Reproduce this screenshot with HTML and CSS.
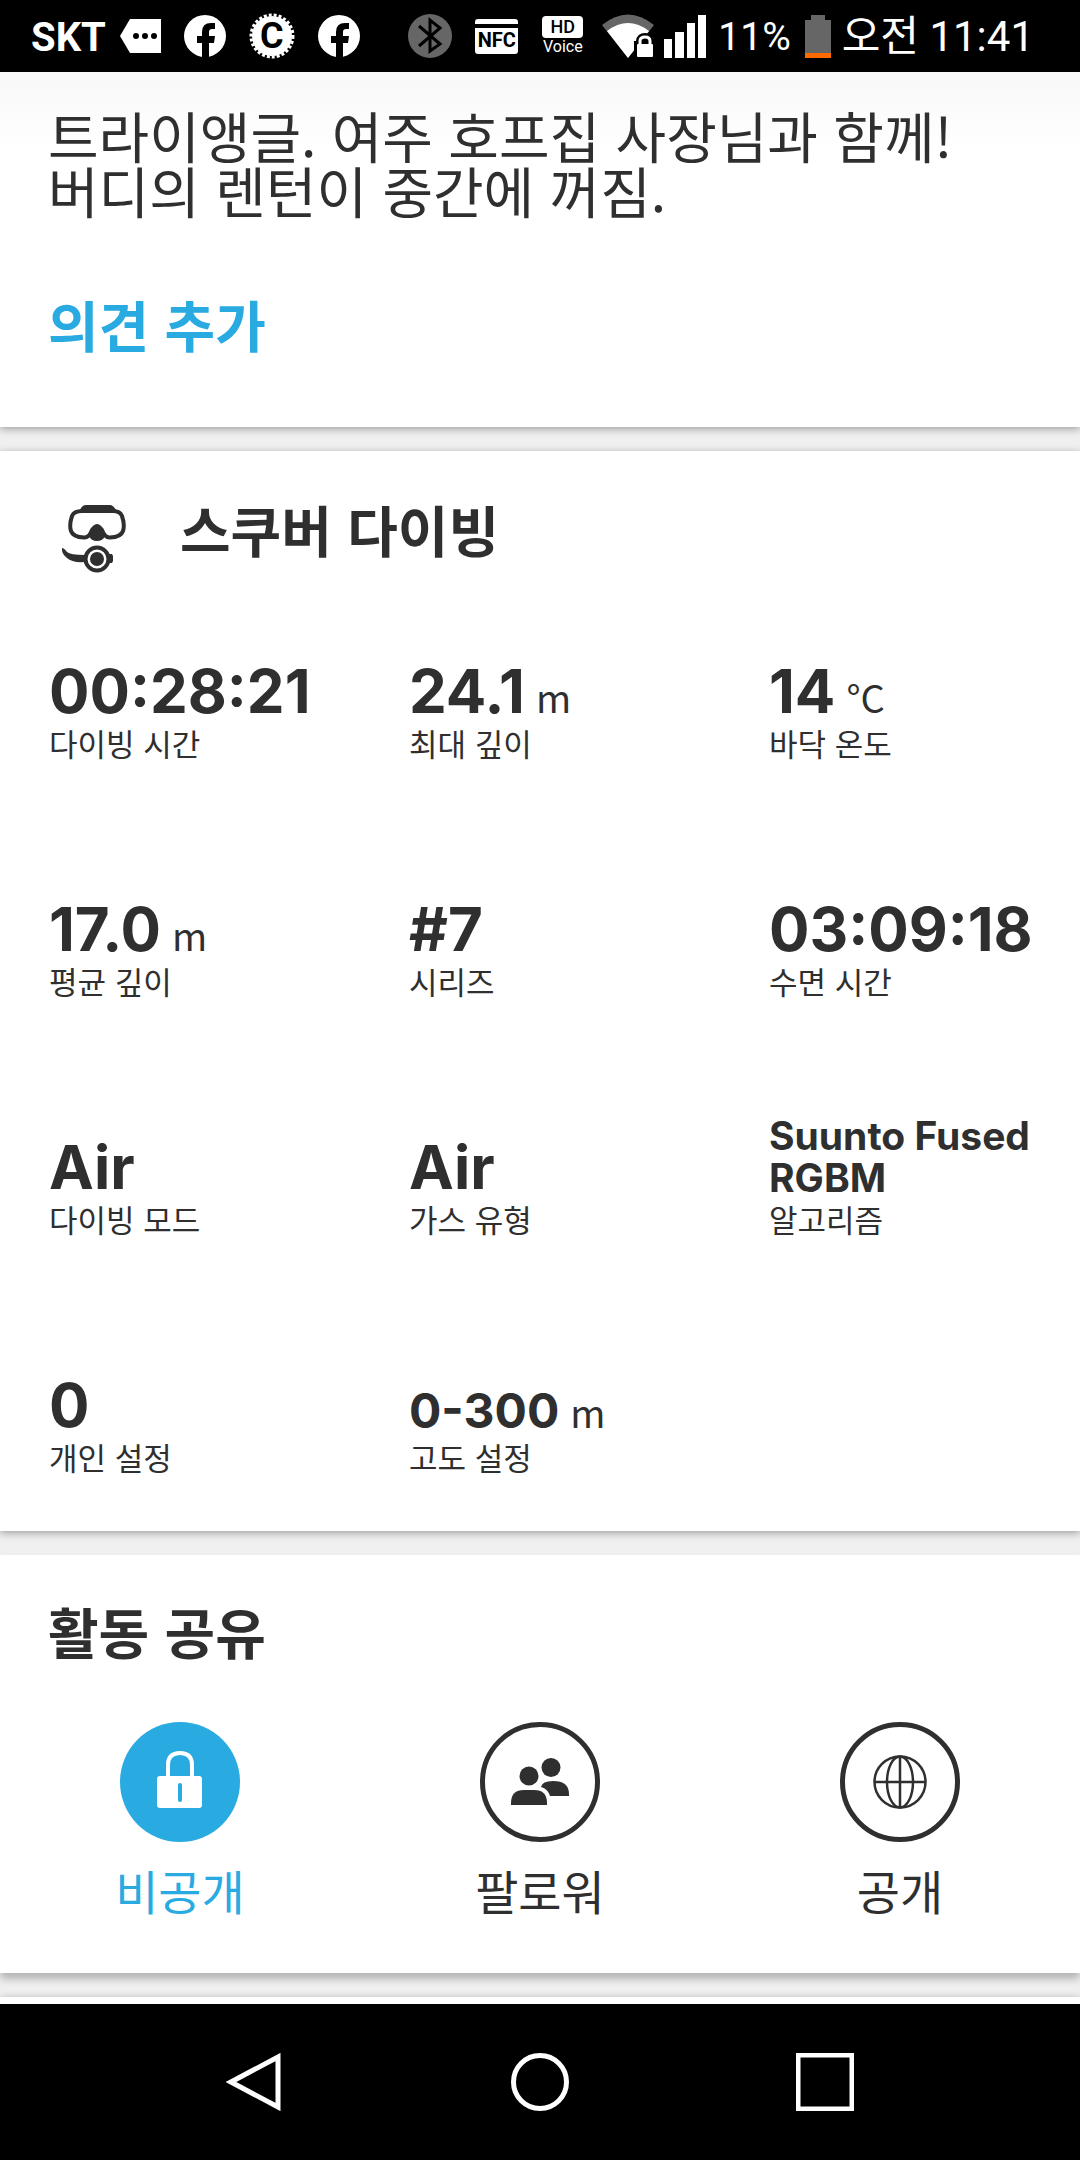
FILE: index.html
```html
<!DOCTYPE html>
<html lang="ko">
<head>
    <meta charset="UTF-8">
    <meta name="viewport" content="width=device-width, initial-scale=1.0">
    <title>스쿠버 다이빙</title>
    <link rel="stylesheet" href="styles.css">
</head>
<body>

    <header class="status-bar">
        <div class="status-left">
            <span class="carrier">SKT</span>
            <svg class="tag" width="41" height="34" viewBox="0 0 41 34">
                <path d="M10 0H41V34H10L0 17Z" fill="#fff"/>
                <circle cx="16" cy="17" r="3"/><circle cx="25" cy="17" r="3"/><circle cx="34" cy="17" r="3"/>
            </svg>
            <svg width="42" height="44" viewBox="0 0 42 44">
                <circle cx="21" cy="22" r="21" fill="#fff"/>
                <path d="M18 44V29H13V22H18V18Q18 9 27 9H31V15H28Q25 15 25 18V22H31L30 29H25V44Z"/>
            </svg>
            <span class="seal">
                <svg width="46" height="46" viewBox="0 0 46 46">
                    <circle cx="23" cy="23" r="20" fill="#fff"/>
                    <circle cx="23" cy="23" r="21" fill="none" stroke="#fff" stroke-width="3" stroke-dasharray="3 2"/>
                </svg>
                <b>C</b>
            </span>
            <svg width="42" height="44" viewBox="0 0 42 44">
                <circle cx="21" cy="22" r="21" fill="#fff"/>
                <path d="M18 44V29H13V22H18V18Q18 9 27 9H31V15H28Q25 15 25 18V22H31L30 29H25V44Z"/>
            </svg>
        </div>
        <div class="status-right">
            <svg class="bluetooth" width="44" height="44" viewBox="0 0 44 44">
                <circle cx="22" cy="22" r="22" fill="#666"/>
                <path d="M11 12L32 30L22 37V6L32 14L11 32" fill="none" stroke="#000" stroke-width="3"/>
            </svg>
            <span class="nfc">NFC</span>
            <span class="voice"><b>HD</b><small>Voice</small></span>
            <svg class="wifi" width="52" height="44" viewBox="0 0 52 44">
                <path d="M0 11Q26 -10 52 11L26 44Z" fill="#666"/>
                <path d="M5 17Q26 1 47 17L26 44Z" fill="#fff"/>
                <path d="M32 44V27H34Q35 19 43 19Q51 19 52 27V44Z"/>
                <path d="M38 30V27Q38 23 43 23Q48 23 48 27V30" fill="none" stroke="#fff" stroke-width="3"/>
                <rect x="35" y="30" width="16" height="13" rx="1" fill="#fff"/>
            </svg>
            <svg class="signal" width="42" height="43" viewBox="0 0 42 43" fill="#fff">
                <rect x="0" y="24" width="8" height="19"/><rect x="11" y="17" width="9" height="26"/>
                <rect x="23" y="8" width="8" height="35"/><rect x="34" y="0" width="8" height="43"/>
            </svg>
            <span class="percent">11%</span>
            <svg class="battery" width="26" height="43" viewBox="0 0 26 43">
                <path d="M6 0H20V5H26V38H0V5H6Z" fill="#666"/>
                <rect y="38" width="26" height="5" fill="#ff6a00"/>
            </svg>
            <span class="clock">오전 11:41</span>
        </div>
    </header>

    <main>
        <section class="card notes">
            <p>트라이앵글. 여주 호프집 사장님과 함께!<br>버디의 렌턴이 중간에 꺼짐.</p>
            <button class="add-comment">의견 추가</button>
        </section>

        <section class="card dive">
            <div class="dive-header">
                <svg width="64" height="68" viewBox="0 0 64 68" fill="#2f2f2f">
                    <path d="M18 5Q20 0 24 0H48Q51 0 54 5L52 8H20Z"/>
                    <path d="M20 6H51Q58 6 60 11Q63 20 61 26Q59 32 48 32.500Q43 33 40 25Q35 18 30 25Q27 33 22 32.500Q11 32 9 26Q7 20 10 11Q12 6 20 6Z" fill="none" stroke="#2f2f2f" stroke-width="4"/>
                    <path d="M27 31Q30 19 35 19Q40 19 43 31Q41 36 35 36Q29 36 27 31Z"/>
                    <path d="M0 43Q2 43 5 47Q8 50 23 50V57Q10 58 5 53Q0 49 0 45Z"/>
                    <path d="M45 49H50L51 51V56L50 58H45Z"/>
                    <circle cx="35" cy="54" r="11.500" fill="#fff" stroke="#2f2f2f" stroke-width="4"/>
                    <circle cx="35" cy="54" r="7"/>
                </svg>
                <h2>스쿠버 다이빙</h2>
            </div>
            <div class="stats">
                <div class="stat"><div class="value">00:28:21</div><div class="label">다이빙 시간</div></div>
                <div class="stat"><div class="value">24.1 <span class="unit">m</span></div><div class="label">최대 깊이</div></div>
                <div class="stat"><div class="value">14 <span class="unit">°C</span></div><div class="label">바닥 온도</div></div>
                <div class="stat"><div class="value">17.0 <span class="unit">m</span></div><div class="label">평균 깊이</div></div>
                <div class="stat"><div class="value">#7</div><div class="label">시리즈</div></div>
                <div class="stat"><div class="value">03:09:18</div><div class="label">수면 시간</div></div>
                <div class="stat"><div class="value">Air</div><div class="label">다이빙 모드</div></div>
                <div class="stat"><div class="value">Air</div><div class="label">가스 유형</div></div>
                <div class="stat"><div class="value small">Suunto Fused RGBM</div><div class="label">알고리즘</div></div>
                <div class="stat"><div class="value">0</div><div class="label">개인 설정</div></div>
                <div class="stat"><div class="value medium">0-300 <span class="unit">m</span></div><div class="label">고도 설정</div></div>
            </div>
        </section>

        <section class="card share">
            <h2>활동 공유</h2>
            <div class="share-options">
                <button class="option active">
                    <svg width="120" height="120" viewBox="0 0 120 120">
                        <circle cx="60" cy="60" r="60" fill="#29abe2"/>
                        <path d="M48 56V43Q48 31 60 31Q72 31 72 43V56" fill="none" stroke="#fff" stroke-width="4"/>
                        <rect x="37" y="54" width="45" height="32" rx="3" fill="#fff"/>
                        <rect x="58" y="61" width="4" height="19" rx="2" fill="#29abe2"/>
                    </svg>
                    <span>비공개</span>
                </button>
                <button class="option">
                    <svg width="120" height="120" viewBox="0 0 120 120" fill="#2f2f2f">
                        <circle cx="60" cy="60" r="57.500" fill="none" stroke="#2f2f2f" stroke-width="5"/>
                        <circle cx="49" cy="54" r="9.500"/>
                        <circle cx="71" cy="45.500" r="9.500"/>
                        <path d="M31 83V81Q31 68 44 68H54Q67 68 67 81V83Z"/>
                        <path d="M61 65Q62 59 73 59Q89 59 89 72V74H70Q68 67 61 65Z"/>
                    </svg>
                    <span>팔로워</span>
                </button>
                <button class="option">
                    <svg width="120" height="120" viewBox="0 0 120 120" fill="none" stroke="#2f2f2f">
                        <circle cx="60" cy="60" r="57.500" stroke-width="5"/>
                        <g stroke-width="2.500">
                            <circle cx="60" cy="60" r="25.500"/>
                            <ellipse cx="60" cy="60" rx="13" ry="25.500"/>
                            <path d="M60 35V85M34 60H86"/>
                        </g>
                    </svg>
                    <span>공개</span>
                </button>
            </div>
        </section>

        <section class="card next"></section>
    </main>

    <nav class="nav-bar">
        <button aria-label="뒤로">
            <svg width="58" height="58" viewBox="0 0 58 58"><path d="M52 4V54L5 29Z"/></svg>
        </button>
        <button aria-label="홈">
            <svg width="58" height="58" viewBox="0 0 58 58"><circle cx="29" cy="29" r="26.500"/></svg>
        </button>
        <button aria-label="최근 앱">
            <svg width="58" height="58" viewBox="0 0 58 58"><rect x="2" y="2" width="54" height="54"/></svg>
        </button>
    </nav>

</body>
</html>
```

FILE: styles.css
```css
* {
    box-sizing: border-box;
}
body {
    font-family: "Noto Sans CJK KR", sans-serif;
    display: flex;
    flex-direction: column;
    height: 100vh;
    margin: 0;
    background-color: #f0f0f0;
    color: #2f2f2f;
}
button {
    border: 0;
    padding: 0;
    background: none;
    font-family: inherit;
    color: inherit;
    cursor: pointer;
}
h2, p {
    margin: 0;
}
svg {
    display: block;
    flex: none;
}

/* status bar */
.status-bar {
    display: flex;
    justify-content: space-between;
    align-items: center;
    flex: none;
    height: 72px;
    padding: 0 46px 0 31px;
    background-color: #000;
    color: #fff;
    font-family: Roboto, "Noto Sans CJK KR", sans-serif;
    white-space: nowrap;
}
.status-left, .status-right {
    display: flex;
    align-items: center;
}
.status-left {
    gap: 23px;
}
.carrier {
    font-size: 40px;
    font-weight: bold;
    line-height: 40px;
    padding-top: 3px;
    margin-right: -9px;
}
.seal {
    position: relative;
}
.seal b {
    position: absolute;
    inset: 0;
    color: #000;
    font-size: 36px;
    line-height: 46px;
    text-align: center;
}
.nfc {
    width: 43px;
    height: 35px;
    margin: 0 24px 0 23px;
    border-top: 5px solid #fff;
    border-radius: 3px;
    background: linear-gradient(#000 4px, #fff 4px);
    color: #000;
    font-size: 20px;
    font-weight: bold;
    line-height: 33px;
    text-align: center;
}
.voice {
    display: flex;
    flex-direction: column;
    width: 41px;
    margin-right: 19px;
    text-align: center;
}
.voice b {
    border-radius: 4px;
    background-color: #fff;
    color: #000;
    font-size: 18px;
    font-weight: 500;
    line-height: 22px;
}
.voice small {
    font-size: 16px;
    line-height: 18px;
}
.signal {
    margin: 0 12px 0 10px;
}
.percent {
    font-size: 39px;
    line-height: 40px;
    padding-top: 2px;
    margin-right: 14px;
}
.clock {
    font-size: 42px;
    line-height: 42px;
    padding-top: 2px;
    margin-left: 11px;
}

/* cards */
main {
    display: flex;
    flex-direction: column;
    gap: 24px;
    flex: 1;
    min-height: 0;
    overflow: hidden;
}
.card {
    flex: none;
    background-color: #fff;
    box-shadow: 0 2px 8px rgba(0, 0, 0, 0.35);
}
.card h2 {
    font-size: 55px;
    font-weight: bold;
    line-height: 64px;
}
.notes {
    padding: 35px 48px 66px;
    background-image: linear-gradient(#f8f8f8, #fff 80px);
    font-size: 55px;
    line-height: 55px;
}
.add-comment {
    display: block;
    margin-top: 69px;
    color: #29abe2;
    font-size: 55px;
    font-weight: bold;
    line-height: 75px;
}
.dive-header {
    display: flex;
    align-items: flex-start;
    gap: 54px;
    padding: 45px 62px 0;
}
.dive-header svg {
    margin-top: 9px;
}
.stats {
    display: grid;
    grid-template-columns: repeat(3, minmax(0, 1fr));
    grid-auto-rows: 126px;
    row-gap: 112px;
    padding: 64px 0 54px;
}
.stat {
    display: flex;
    flex-direction: column;
    justify-content: flex-end;
    padding: 0 48px 0 49px;
}
.value {
    display: flex;
    align-items: baseline;
    gap: 11px;
    font-family: Inter, sans-serif;
    font-size: 60px;
    font-weight: bold;
    line-height: 64px;
}
.value.medium {
    font-size: 48px;
    line-height: 52px;
}
.value.small {
    font-size: 39px;
    line-height: 42px;
}
.unit {
    font-family: "Noto Sans CJK KR", sans-serif;
    font-size: 38px;
    font-weight: normal;
    line-height: 40px;
}
.label {
    font-size: 31px;
    line-height: 40px;
}
.share {
    padding: 43px 0 49px;
    box-shadow: 0 6px 8px rgba(0, 0, 0, 0.25);
}
.share h2 {
    padding: 0 48px;
}
.share-options {
    display: grid;
    grid-template-columns: repeat(3, 1fr);
    margin-top: 60px;
}
.option {
    display: flex;
    flex-direction: column;
    align-items: center;
    gap: 14px;
    font-size: 47px;
    line-height: 68px;
}
.option.active {
    color: #29abe2;
}
.next {
    flex: 1;
}

/* navigation bar */
.nav-bar {
    display: flex;
    justify-content: center;
    flex: none;
    height: 156px;
    background-color: #000;
}
.nav-bar button {
    display: flex;
    justify-content: center;
    align-items: center;
    width: 285px;
}
.nav-bar svg {
    fill: none;
    stroke: #fff;
    stroke-width: 5;
}
```
